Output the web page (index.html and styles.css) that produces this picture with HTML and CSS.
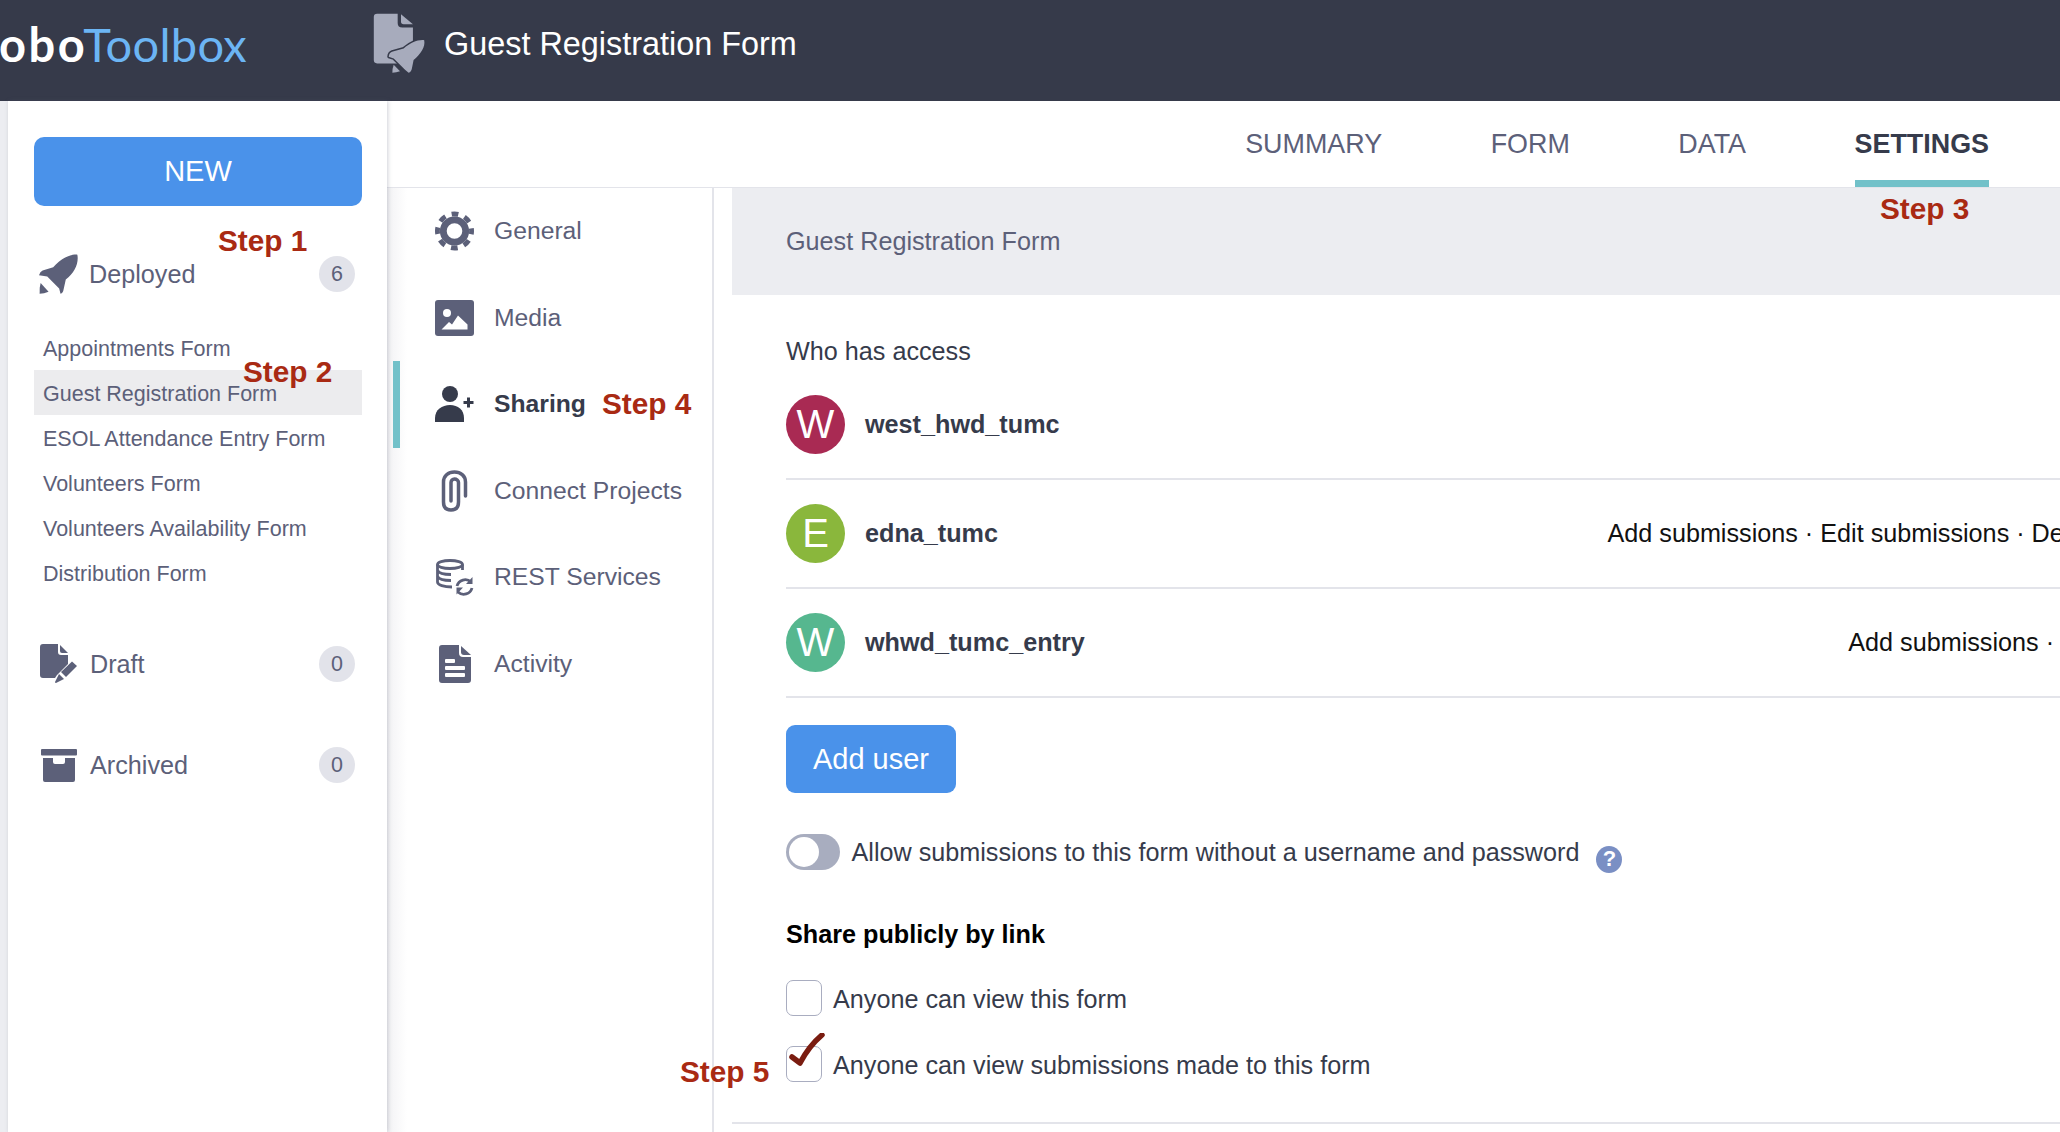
FILE: index.html
```html
<!DOCTYPE html>
<html lang="en">
<head>
<meta charset="utf-8">
<title>Guest Registration Form</title>
<link rel="stylesheet" href="styles.css">
</head>
<body>
<div class="page">
  <header class="topbar">
    <div class="logo"><span class="logo-kobo">obo</span><span class="logo-toolbox">Toolbox</span></div>
    <svg class="form-icon" viewBox="35 25 165 190"><path class="fi" d="M50 30H112V58Q112 72 126 72H158V170Q158 180 148 180H50Q40 180 40 170V40Q40 30 50 30Z"/><path class="fi" d="M122 32L158 62H130Q122 62 122 54Z"/><path class="fi fi-rocket" d="M192 110C172 108 150 118 130 135L95 145Q86 148 85 160L100 165L135 200L145 208Q153 207 155 195L160 170C182 150 196 130 192 110Z"/><path class="fi" d="M100 184L119 204Q108 208 96 208Q96 195 100 184Z"/></svg>
    <div class="form-title">Guest Registration Form</div>
  </header>
  <div class="shell">
    <aside class="sidebar">
      <button class="new-btn">NEW</button>
      <div class="cat cat-deployed">
        <svg class="cat-icon icon-rocket" viewBox="25 25 125 130"><path d="M143 30C125 28 95 40 70 68L38 78Q30 82 27 92L52 96L88 132L92 148Q100 146 102 132L108 105C135 85 148 55 143 30Z"/><path d="M32 116L56 142Q42 148 29 148Q28 130 32 116Z"/></svg>
        <span class="cat-label">Deployed</span><span class="badge">6</span>
      </div>
      <ul class="form-list">
        <li>Appointments Form</li>
        <li class="is-active">Guest Registration Form</li>
        <li>ESOL Attendance Entry Form</li>
        <li>Volunteers Form</li>
        <li>Volunteers Availability Form</li>
        <li>Distribution Form</li>
      </ul>
      <div class="cat cat-draft">
        <svg class="cat-icon icon-draft" viewBox="0 0 38 41"><path d="M3 0H18V8Q18 11 21 11H28V20L17 31L15 34H3Q0 34 0 31V3Q0 0 3 0Z"/><path d="M20 1L28 9H22Q20 9 20 7Z"/><path d="M21 28L32 17.5L37 22L26 33Z"/><path d="M19 30L24 35L16 39Q15 39 15 38Z"/></svg>
        <span class="cat-label">Draft</span><span class="badge">0</span>
      </div>
      <div class="cat cat-archived">
        <svg class="cat-icon icon-archive" viewBox="0 0 36 33"><rect width="36" height="6.5" rx="1"/><path d="M2 9H12V13Q12 15 14 15H22Q24 15 24 13V9H34V31Q34 33 32 33H4Q2 33 2 31Z"/></svg>
        <span class="cat-label">Archived</span><span class="badge">0</span>
      </div>
    </aside>
    <main class="main">
      <nav class="tabs">
        <a class="tab">SUMMARY</a>
        <a class="tab">FORM</a>
        <a class="tab">DATA</a>
        <a class="tab is-active">SETTINGS</a>
      </nav>
      <div class="settings">
        <nav class="subnav">
          <a class="sub">
            <span class="sub-icon"><svg class="i-gear" viewBox="0 0 40 40"><circle class="gear-ring" cx="20" cy="20" r="11.5"/><circle class="gear-teeth" cx="20" cy="20" r="17.5"/></svg></span>General
          </a>
          <a class="sub">
            <span class="sub-icon"><svg class="i-media" viewBox="0 0 39 36"><rect width="39" height="36" rx="3"/><circle class="knock" cx="12" cy="13" r="4"/><path class="knock" d="M6.5 29.5L14 22L17 24.5L23 15.5L32.5 24.5V29.5Z"/></svg></span>Media
          </a>
          <a class="sub is-active">
            <span class="sub-icon"><svg class="i-share" viewBox="0 0 39 36"><circle cx="15" cy="8" r="8"/><path d="M0 36V32C0 24 7 19 15 19C23 19 29 24 29 32V36Z"/><path class="plus" d="M33.5 11.5V21.5M28.5 16.5H38.5"/></svg></span>Sharing
          </a>
          <a class="sub">
            <span class="sub-icon"><svg class="i-clip" viewBox="0 0 27 42"><path d="M24.5 26V12C24.5 5.5 19.5 2 13.5 2C7 2 2.5 6 2.5 12V32C2.5 38 6 40 10 40C15 40 17.5 37 17.5 32V12.5C17.5 10.5 15.5 9 13.5 9C11.5 9 10 10.5 10 12.5V31"/></svg></span>Connect Projects
          </a>
          <a class="sub">
            <span class="sub-icon"><svg class="i-rest" viewBox="0 0 38 37"><ellipse cx="14" cy="5.5" rx="12.5" ry="4"/><path d="M1.5 5.5V23C1.5 26 8 28 16 28M1.5 11.5C3 14.5 9 15.5 15 15.5M1.5 17.5C3 20.5 9 21.5 15 21.5M26.5 5.5V11"/><path d="M21 27A8.5 8.5 0 0 1 35 23M36 29A8.5 8.5 0 0 1 22 33"/><path class="arrow" d="M36.5 18V25H30ZM20.5 35.5V28.5H27Z"/></svg></span>REST Services
          </a>
          <a class="sub">
            <span class="sub-icon"><svg class="i-activity" viewBox="0 0 32 38"><path d="M3 0H20V8Q20 12 24 12H32V35Q32 38 29 38H3Q0 38 0 35V3Q0 0 3 0Z"/><path d="M22 1L32 10H25Q22 10 22 7Z"/><rect class="knock" x="6" y="14" width="10" height="4" rx="1"/><rect class="knock" x="6" y="21" width="20" height="4" rx="1"/><rect class="knock" x="6" y="28" width="20" height="4" rx="1"/></svg></span>Activity
          </a>
        </nav>
        <section class="panel">
          <div class="band">Guest Registration Form</div>
          <div class="panel-body">
            <h2 class="access-title">Who has access</h2>
            <div class="access-row">
              <span class="avatar av-red">W</span><span class="username">west_hwd_tumc</span>
            </div>
            <div class="access-row">
              <span class="avatar av-green">E</span><span class="username">edna_tumc</span>
              <span class="perms">Add submissions · Edit submissions · Delete submissions</span>
            </div>
            <div class="access-row">
              <span class="avatar av-teal">W</span><span class="username">whwd_tumc_entry</span>
              <span class="perms">Add submissions · Edit submissions</span>
            </div>
            <button class="add-user">Add user</button>
            <div class="toggle-row">
              <span class="toggle"><span class="knob"></span></span>
              <span class="toggle-label">Allow submissions to this form without a username and password</span>
              <span class="help">?</span>
            </div>
            <h3 class="share-title">Share publicly by link</h3>
            <label class="check-row"><span class="box"></span><span class="check-label">Anyone can view this form</span></label>
            <label class="check-row check-row-2"><span class="box"></span><span class="check-label">Anyone can view submissions made to this form</span></label>
          </div>
        </section>
      </div>
    </main>
  </div>
  <span class="step step-1">Step 1</span>
  <span class="step step-2">Step 2</span>
  <span class="step step-3">Step 3</span>
  <span class="step step-4">Step 4</span>
  <span class="step step-5">Step 5</span>
  <svg class="tick" viewBox="0 0 36 34"><path d="M3 24L11 30Q20 13 33 2"/></svg>
</div>
</body>
</html>
```
FILE: styles.css
```css
* { box-sizing: border-box; }
html, body { margin: 0; height: 100%; overflow: hidden; }
body { background: #fff; font-family: "Liberation Sans", Arial, sans-serif; color: #363b4b; }
.page { position: relative; width: 2060px; height: 1132px; overflow: hidden; }

.topbar { height: 101px; background: #363a4a; display: flex; align-items: center; padding-bottom: 14px; overflow: hidden; }
.logo { width: 247px; flex: none; display: flex; justify-content: flex-end; white-space: nowrap; font-family: Lato, sans-serif; font-size: 47px; line-height: 54px; }
.logo-kobo { color: #fff; font-weight: 700; letter-spacing: 2.5px; margin-right: -4px; }
.logo-toolbox { color: #6cb5f4; font-weight: 400; letter-spacing: .3px; }
.form-icon { width: 55px; height: 63px; margin-left: 125px; flex: none; }
.fi { fill: #a7abbc; }
.fi-rocket { stroke: #363a4a; stroke-width: 9; paint-order: stroke; stroke-linejoin: round; }
.form-title { margin-left: 17px; color: #fff; font-size: 32.4px; line-height: 40px; white-space: nowrap; }

.shell { display: flex; height: 1031px; background: #ecedf1; padding-left: 8px; }
.sidebar { width: 379px; flex: none; background: #fff; padding: 36px 25px 0 26px; box-shadow: 1px 0 4px rgba(90, 95, 120, .28); position: relative; z-index: 1; }
.new-btn { display: block; width: 328px; height: 69px; background: #4a92ea; color: #fff; border: 0; border-radius: 10px; font: 29px "Liberation Sans", Arial, sans-serif; padding: 0; }
.cat { display: flex; align-items: center; height: 44px; padding-right: 7px; color: #5c6079; font-size: 25.2px; }
.cat-deployed { margin-top: 46px; }
.cat-draft { margin-top: 46px; }
.cat-archived { margin-top: 57px; }
.cat-icon { flex: none; fill: #5c6079; }
.icon-rocket { width: 42px; height: 43px; margin-left: 4px; margin-right: 9px; }
.icon-draft { width: 38px; height: 41px; margin-left: 6px; margin-right: 12px; }
.icon-archive { width: 36px; height: 33px; margin-left: 7px; margin-right: 13px; }
.cat-label { flex: 1; }
.badge { width: 36px; height: 36px; border-radius: 50%; background: #e2e3ea; color: #5c6079; font-size: 21.5px; display: flex; align-items: center; justify-content: center; }
.form-list { list-style: none; margin: 29px 0 0; padding: 0; }
.form-list li { height: 45px; line-height: 48px; padding-left: 9px; color: #5c6079; font-size: 21.5px; white-space: nowrap; }
.form-list li.is-active { background: #ececee; }
.form-list + .cat { margin-top: 47px; }

.main { flex: 1; min-width: 0; background: #fff; display: flex; flex-direction: column; }
.tabs { height: 87px; flex: none; border-bottom: 1px solid #e3e4ea; display: flex; justify-content: flex-end; gap: 108.5px; padding-right: 71px; }
.tab { display: flex; align-items: center; height: 86px; font-size: 26.9px; color: #5c6079; }
.tab.is-active { color: #363b4b; font-weight: 700; box-shadow: inset 0 -7px 0 #72c1c9; }
.settings { flex: 1; display: flex; min-height: 0; }
.subnav { width: 327px; flex: none; border-right: 2px solid #e3e4ea; background: linear-gradient(to right, #f2f2f4, #fff 20px); padding-left: 6px; }
.sub { display: flex; align-items: center; height: 86.5px; font-size: 24.7px; color: #5c6079; border-left: 7px solid transparent; padding-left: 35px; }
.sub.is-active { border-left-color: #72c1c9; color: #363b4b; font-weight: 700; }
.sub-icon { width: 39px; height: 43px; margin-right: 20px; flex: none; display: flex; align-items: center; justify-content: center; }
.i-gear { width: 40px; height: 40px; fill: none; stroke: #5c6079; }
.gear-ring { stroke-width: 7; }
.gear-teeth { stroke-width: 5; stroke-dasharray: 7 6.74; stroke-dashoffset: 3.5; }
.i-media { width: 39px; height: 36px; fill: #5c6079; }
.i-media .knock { fill: #fff; }
.i-share { width: 39px; height: 36px; fill: #363b4b; }
.plus { fill: none; stroke: #363b4b; stroke-width: 3; }
.i-clip { width: 27px; height: 42px; fill: none; stroke: #5c6079; stroke-width: 3.5; stroke-linecap: round; }
.i-rest { width: 38px; height: 37px; fill: none; stroke: #5c6079; stroke-width: 2.8; }
.i-rest .arrow { fill: #5c6079; stroke: none; }
.i-activity { width: 32px; height: 38px; fill: #5c6079; }
.i-activity .knock { fill: #fff; }

.panel { flex: 1; min-width: 0; margin-left: 18px; }
.band { height: 107px; background: #ecedf1; padding-left: 54px; display: flex; align-items: center; font-size: 25.2px; color: #5c6079; }
.panel-body { padding: 41px 0 40px 54px; border-bottom: 2px solid #e3e4ea; }
.access-title { margin: 0 0 5px; font-size: 25.2px; font-weight: 400; line-height: 30px; color: #363b4b; }
.access-row { width: 1464px; height: 109px; display: flex; align-items: center; border-bottom: 2px solid #e3e4ea; }
.avatar { width: 59px; height: 59px; border-radius: 50%; flex: none; display: flex; align-items: center; justify-content: center; color: #fff; font-size: 40px; margin-right: 20px; }
.av-red { background: #a92a53; }
.av-green { background: #8ab73c; }
.av-teal { background: #56b78f; }
.username { font-weight: 700; font-size: 25.2px; color: #363b4b; }
.perms { margin-left: auto; font-size: 25.2px; color: #111; white-space: nowrap; }
.add-user { display: block; margin-top: 27px; width: 170px; height: 68px; border: 0; border-radius: 9px; background: #4a92ea; color: #fff; font: 29px "Liberation Sans", Arial, sans-serif; padding: 0; }
.toggle-row { display: flex; align-items: center; margin-top: 41px; height: 36px; font-size: 25.2px; color: #363b4b; }
.toggle { width: 54px; height: 36px; border-radius: 18px; background: #a8adbf; padding: 3px; margin-right: 11.5px; flex: none; }
.knob { display: block; width: 30px; height: 30px; border-radius: 50%; background: #fff; }
.help { width: 26px; height: 27px; margin: 14px 0 0 17px; border-radius: 50%; background: #7a8fc4; color: #fff; font-weight: 700; font-size: 22px; display: flex; align-items: center; justify-content: center; }
.share-title { margin: 49px 0 0; font-size: 25.2px; font-weight: 700; line-height: 30px; color: #000; }
.check-row { display: flex; align-items: center; margin-top: 31px; height: 36px; font-size: 25.2px; color: #363b4b; }
.check-row-2 { margin-top: 30px; }
.check-label { padding-top: 3px; }
.box { width: 36px; height: 36px; border: 1.5px solid #a9adc0; border-radius: 7px; margin-right: 11px; flex: none; background: #fff; }

.step { position: absolute; color: #a92a13; font-weight: 700; font-size: 29.8px; line-height: 34px; white-space: nowrap; z-index: 2; }
.step-1 { left: 218px; top: 224px; }
.step-2 { left: 243px; top: 355px; }
.step-3 { left: 1880px; top: 192px; }
.step-4 { left: 602px; top: 387px; }
.step-5 { left: 680px; top: 1055px; }
.tick { position: absolute; left: 789px; top: 1033px; width: 36px; height: 34px; fill: none; stroke: #7a1c10; stroke-width: 5.5; stroke-linecap: round; stroke-linejoin: round; z-index: 2; }
```
